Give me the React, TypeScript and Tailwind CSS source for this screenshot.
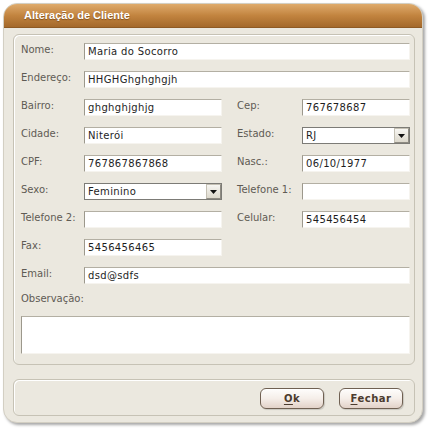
function TextBox({ value = "", width }: { value?: string; width?: string }) {
    return (
        <div className={`h-[17px] ${width ?? "flex-1"} bg-white border border-t-[#b3afa3] border-l-[#9c988c] border-r-[#f6f4ef] border-b-[#f6f4ef] pl-[3px] flex items-center text-[10px] text-[#1e1e1e] tracking-[0.35px] leading-none whitespace-nowrap overflow-hidden`}>
            {value}
        </div>
    );
}

function SelectBox({ value, width }: { value: string; width: string }) {
    return (
        <div className={`h-[17px] ${width} bg-white border border-[#7c7b76] flex items-center`}>
            <span className="flex-1 pl-[3px] text-[10px] text-[#1e1e1e] tracking-[0.35px] leading-none">{value}</span>
            <div className="w-[15px] h-[15px] bg-gradient-to-b from-[#f7f6f2] to-[#dcd8cc] border border-[#c4c0b4] border-r-[#8e8b82] border-b-[#8e8b82] flex items-center justify-center">
                <svg width="7" height="4" viewBox="0 0 7 4">
                    <path d="M0 0h7L3.5 4z" fill="#111" />
                </svg>
            </div>
        </div>
    );
}

function Label({ text, width }: { text: string; width: string }) {
    return <div className={`${width} text-[10px] text-[#5f5b54] leading-none pb-[3px] whitespace-nowrap`}>{text}</div>;
}

function Button({ first, rest }: { first: string; rest: string }) {
    return (
        <button className="w-[64px] h-[21px] rounded-[6px] border border-[#6f6052] bg-gradient-to-b from-[#fefdfc] via-[#f5eee9] to-[#e2d2c8] shadow-[inset_0_1px_0_#ffffff,1px_1px_1px_rgba(0,0,0,0.15)] text-[10px] font-bold text-[#4b3b2e] tracking-[0.5px] leading-none">
            <span className="underline underline-offset-2">{first}</span>
            {rest}
        </button>
    );
}

export default function App() {
    return (
        <div className="w-[428px] h-[428px] bg-white p-[3px] font-['DejaVu_Sans',sans-serif]">
            <div className="w-[420px] h-[420px] rounded-[14px] bg-[#ebe8df] border border-[#d3cfc3] shadow-[2px_2px_3px_rgba(0,0,0,0.35)] flex flex-col overflow-hidden">
                {/* Title bar */}
                <div className="h-[24px] shrink-0 bg-gradient-to-b from-[#dfab6c] via-[#c2843f] to-[#a4692b] border-b border-[#8e5a24] flex items-center pl-[20px]">
                    <span className="font-['Liberation_Sans',sans-serif] font-bold text-[11px] text-white [text-shadow:0_1px_1px_rgba(80,40,0,0.5)]">
                        Alteração de Cliente
                    </span>
                </div>

                <div className="flex-1 flex flex-col pl-[9px] pr-[7px] pt-[6px]">
                    {/* Form panel */}
                    <div className="h-[331px] rounded-[6px] border border-[#c6c2b5] shadow-[inset_1px_1px_0_#ffffff] bg-[#ebe8df] pt-[8px] pl-[7px] pr-[4px] flex flex-col">
                        <div className="flex flex-col gap-[11px]">
                            <div className="flex items-center h-[17px]">
                                <Label text="Nome:" width="w-[63px]" />
                                <TextBox value="Maria do Socorro" />
                            </div>
                            <div className="flex items-center h-[17px]">
                                <Label text="Endereço:" width="w-[63px]" />
                                <TextBox value="HHGHGhghghgjh" />
                            </div>
                            <div className="flex items-center h-[17px]">
                                <Label text="Bairro:" width="w-[63px]" />
                                <TextBox value="ghghghjghjg" width="w-[138px]" />
                                <Label text="Cep:" width="w-[65px] ml-[15px]" />
                                <TextBox value="767678687" width="w-[108px]" />
                            </div>
                            <div className="flex items-center h-[17px]">
                                <Label text="Cidade:" width="w-[63px]" />
                                <TextBox value="Niterói" width="w-[138px]" />
                                <Label text="Estado:" width="w-[65px] ml-[15px]" />
                                <SelectBox value="RJ" width="w-[108px]" />
                            </div>
                            <div className="flex items-center h-[17px]">
                                <Label text="CPF:" width="w-[63px]" />
                                <TextBox value="767867867868" width="w-[138px]" />
                                <Label text="Nasc.:" width="w-[65px] ml-[15px]" />
                                <TextBox value="06/10/1977" width="w-[108px]" />
                            </div>
                            <div className="flex items-center h-[17px]">
                                <Label text="Sexo:" width="w-[63px]" />
                                <SelectBox value="Feminino" width="w-[138px]" />
                                <Label text="Telefone 1:" width="w-[65px] ml-[15px]" />
                                <TextBox width="w-[108px]" />
                            </div>
                            <div className="flex items-center h-[17px]">
                                <Label text="Telefone 2:" width="w-[63px]" />
                                <TextBox width="w-[138px]" />
                                <Label text="Celular:" width="w-[65px] ml-[15px]" />
                                <TextBox value="545456454" width="w-[108px]" />
                            </div>
                            <div className="flex items-center h-[17px]">
                                <Label text="Fax:" width="w-[63px]" />
                                <TextBox value="5456456465" width="w-[138px]" />
                            </div>
                            <div className="flex items-center h-[17px]">
                                <Label text="Email:" width="w-[63px]" />
                                <TextBox value="dsd@sdfs" />
                            </div>
                        </div>

                        <div className="mt-[9px] h-[12px] text-[10px] text-[#5f5b54] leading-[12px]">Observação:</div>
                        <div className="mt-[11px] h-[38px] bg-white border border-t-[#b3afa3] border-l-[#9c988c] border-r-[#f6f4ef] border-b-[#f6f4ef]" />
                    </div>

                    {/* Buttons panel */}
                    <div className="mt-[14px] h-[37px] rounded-[6px] border border-[#c6c2b5] shadow-[inset_1px_1px_0_#ffffff] bg-[#ebe8df] flex items-start justify-end gap-[15px] pt-[8px] pr-[11px]">
                        <Button first="O" rest="k" />
                        <Button first="F" rest="echar" />
                    </div>
                </div>
            </div>
        </div>
    );
}
